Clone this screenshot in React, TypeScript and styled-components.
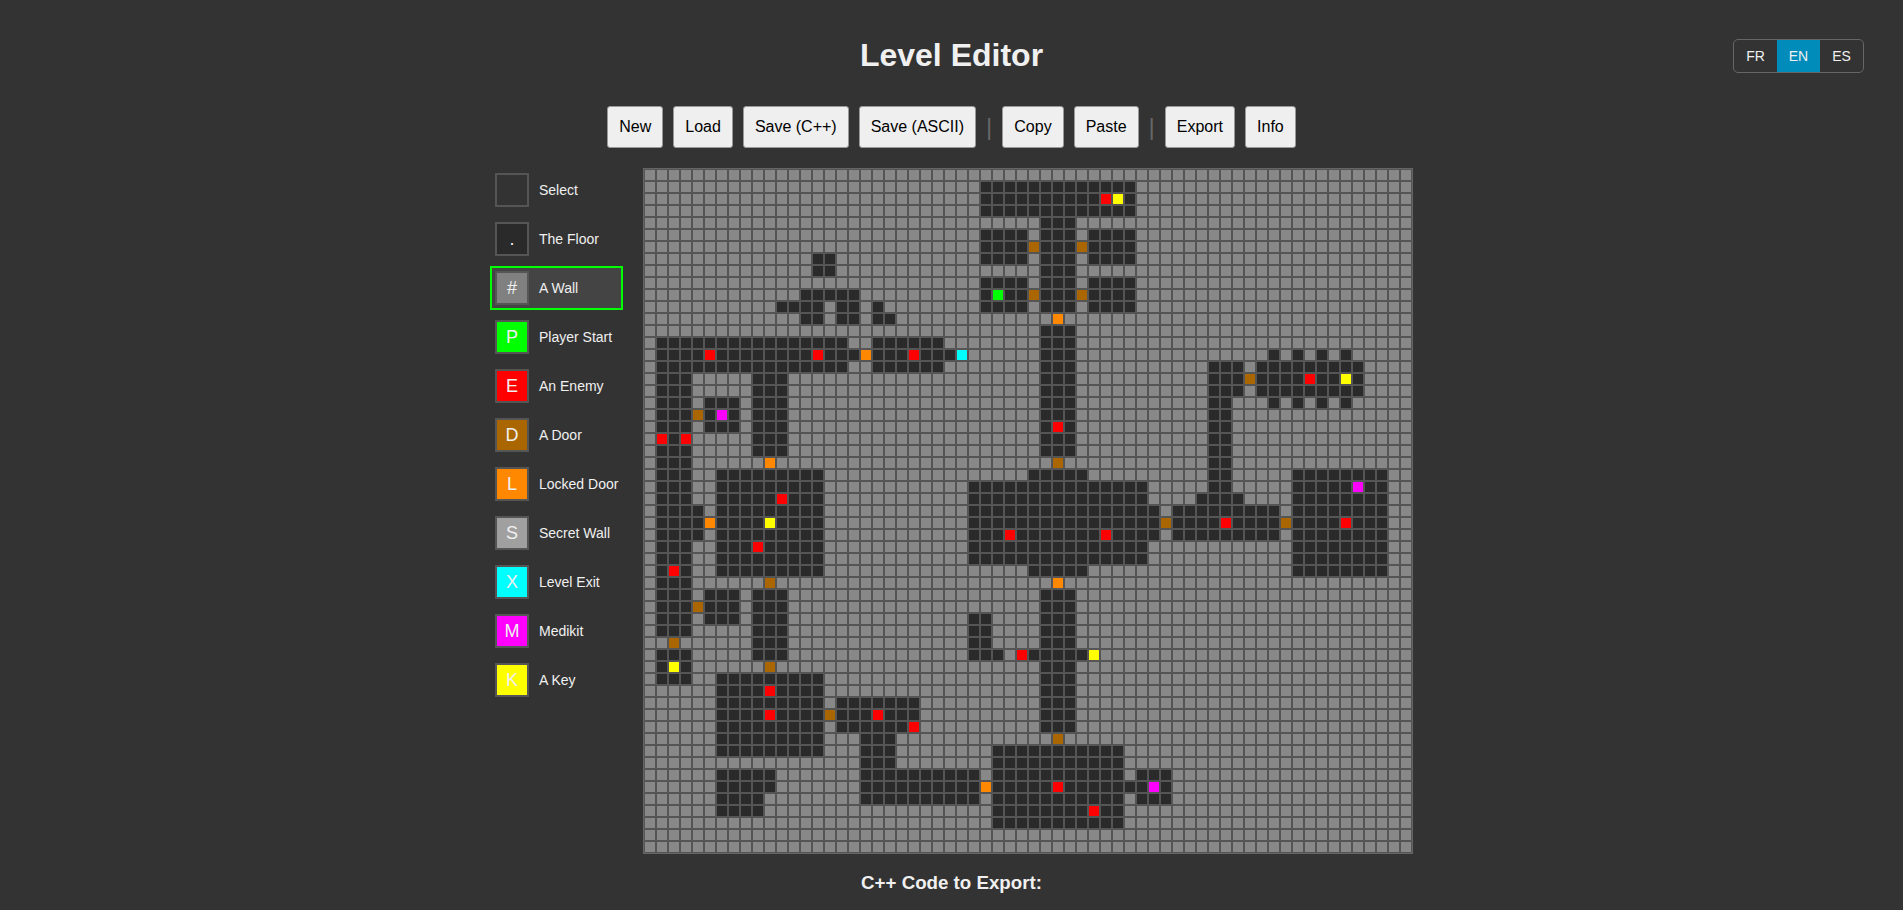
import React from "react";
import styled, { createGlobalStyle } from "styled-components";

type Kind = "." | "#" | "P" | "E" | "D" | "L" | "S" | "X" | "M" | "K" | "";

const COLORS: Record<string, string> = {
  "": "transparent",
  ".": "#2a2a2a",
  "#": "#888888",
  P: "#00ff00",
  E: "#ff0000",
  D: "#aa6600",
  L: "#ff8800",
  S: "#a0a0a0",
  X: "#00ffff",
  M: "#ff00ff",
  K: "#ffff00",
};

const COLS = 64;

const FLOORS: string[] = [
  "",
  "28-40",
  "28-40",
  "28-40",
  "33-35",
  "28-31,33-35,37-40",
  "28-31,33-35,37-40",
  "14-15,28-31,33-35,37-40",
  "14-15,33-35",
  "28-31,33-35,37-40",
  "13-17,28-31,33-35,37-40",
  "11-14,16-17,19,28-31,33-35,37-40",
  "13-14,16-17,19-20",
  "33-35",
  "1-16,19-24,33-35",
  "1-17,19-25,33-35,52,54,56,58",
  "1-16,19-24,33-35,47-49,51-59",
  "1-3,9-11,33-35,47-49,51-59",
  "1-3,9-11,33-35,47-49,51-59",
  "1-3,5-7,9-11,33-35,47-48,52,54,56,58",
  "1-3,5-7,9-11,33-35,47-48",
  "1-3,5-7,9-11,33-35,47-48",
  "1-3,9-11,33-35,47-48",
  "1-3,9-11,33-35,47-48",
  "1-3,47-48",
  "1-3,6-14,32-36,47-48,54-61",
  "1-3,6-14,27-41,47-48,54-61",
  "1-3,6-14,27-41,46-49,54-61",
  "1-4,6-14,27-42,44-52,54-61",
  "1-4,6-14,27-42,44-52,54-61",
  "1-4,6-14,27-42,44-52,54-61",
  "1-3,6-14,27-41,54-61",
  "1-3,6-14,27-41,54-61",
  "1-3,6-14,32-36,54-61",
  "1-3",
  "1-3,5-7,9-11,33-35",
  "1-3,5-7,9-11,33-35",
  "1-3,5-7,9-11,27-28,33-35",
  "1-3,9-11,27-28,33-35",
  "9-11,27-28,33-35",
  "1-3,9-11,27-29,32-36",
  "1-3,33-35",
  "1-3,6-14,33-35",
  "6-14,33-35",
  "6-14,16-22,33-35",
  "6-14,16-22,33-35",
  "6-14,16-21,33-35",
  "6-14,18-20",
  "6-14,18-20,29-39",
  "18-20,29-39",
  "6-10,18-27,29-39,41-43",
  "6-10,18-27,29-41,43",
  "6-9,18-27,29-39,41-43",
  "6-9,29-39",
  "29-39",
  "",
  "",
];

const ENTITIES: [number, number, Kind][] = [
  [2, 38, "E"], [2, 39, "K"],
  [6, 32, "D"], [6, 36, "D"],
  [10, 29, "P"], [10, 32, "D"], [10, 36, "D"],
  [12, 34, "L"],
  [15, 5, "E"], [15, 14, "E"], [15, 18, "L"], [15, 22, "E"], [15, 26, "X"],
  [17, 50, "D"], [17, 55, "E"], [17, 58, "K"],
  [20, 4, "D"], [20, 6, "M"],
  [21, 34, "E"],
  [22, 1, "E"], [22, 3, "E"],
  [24, 10, "L"], [24, 34, "D"],
  [26, 59, "M"],
  [27, 11, "E"],
  [29, 5, "L"], [29, 10, "K"], [29, 43, "D"], [29, 48, "E"], [29, 53, "D"], [29, 58, "E"],
  [30, 30, "E"], [30, 38, "E"],
  [31, 9, "E"],
  [33, 2, "E"],
  [34, 10, "D"], [34, 34, "L"],
  [36, 4, "D"],
  [39, 2, "D"],
  [40, 31, "E"], [40, 37, "K"],
  [41, 2, "K"], [41, 10, "D"],
  [43, 10, "E"],
  [45, 10, "E"], [45, 15, "D"], [45, 19, "E"],
  [46, 22, "E"],
  [47, 34, "D"],
  [51, 28, "L"], [51, 34, "E"], [51, 42, "M"],
  [53, 37, "E"],
];

function buildMap(): Kind[] {
  const rows: Kind[][] = FLOORS.map((spec) => {
    const row: Kind[] = new Array(COLS).fill("#");
    spec.split(",").filter(Boolean).forEach((part) => {
      const [a, b] = part.split("-").map(Number);
      for (let c = a; c <= (b ?? a); c++) row[c] = ".";
    });
    return row;
  });
  ENTITIES.forEach(([r, c, k]) => {
    rows[r][c] = k;
  });
  return rows.flat();
}

const MAP = buildMap();

const TOOLS: { key: Kind; label: string; glyph: string }[] = [
  { key: "", label: "Select", glyph: "" },
  { key: ".", label: "The Floor", glyph: "." },
  { key: "#", label: "A Wall", glyph: "#" },
  { key: "P", label: "Player Start", glyph: "P" },
  { key: "E", label: "An Enemy", glyph: "E" },
  { key: "D", label: "A Door", glyph: "D" },
  { key: "L", label: "Locked Door", glyph: "L" },
  { key: "S", label: "Secret Wall", glyph: "S" },
  { key: "X", label: "Level Exit", glyph: "X" },
  { key: "M", label: "Medikit", glyph: "M" },
  { key: "K", label: "A Key", glyph: "K" },
];

const ACTIONS = [
  ["New", "Load", "Save (C++)", "Save (ASCII)"],
  ["Copy", "Paste"],
  ["Export", "Info"],
];

const Global = createGlobalStyle`
  html, body {
    margin: 0;
    height: 100%;
    overflow: hidden;
    background: #333333;
    color: #f0f0f0;
    font-family: "Liberation Sans", Arial, sans-serif;
  }
`;

const Page = styled.div`
  position: relative;
  padding-top: 37px;
  display: flex;
  flex-direction: column;
  align-items: center;
`;

const Title = styled.h1`
  margin: 0 0 32px;
  font-size: 32px;
  line-height: 37px;
  font-weight: 700;
  color: #f0f0f0;
`;

const LangSwitch = styled.div`
  position: absolute;
  top: 39px;
  right: 39px;
  display: flex;
  height: 34px;
  box-sizing: border-box;
  border: 1px solid #666666;
  border-radius: 5px;
  overflow: hidden;
`;

const LangButton = styled.button<{ $active?: boolean }>`
  width: 43px;
  padding: 0;
  border: 0;
  background: ${(p) => (p.$active ? "#008cba" : "transparent")};
  color: #f0f0f0;
  font-family: inherit;
  font-size: 14px;
`;

const Toolbar = styled.div`
  display: flex;
  align-items: center;
  gap: 10px;
  height: 42px;
  margin-bottom: 20px;
`;

const ActionButton = styled.button`
  height: 42px;
  box-sizing: border-box;
  padding: 0 11px;
  border: 1px solid #999999;
  border-radius: 3px;
  background: #efefef;
  color: #000000;
  font-family: inherit;
  font-size: 16px;
`;

const Separator = styled.span`
  font-size: 24px;
  line-height: 28px;
  color: #666666;
`;

const Workspace = styled.div`
  display: flex;
  align-items: flex-start;
  gap: 20px;
`;

const Palette = styled.div`
  display: flex;
  flex-direction: column;
  gap: 5px;
  width: 133px;
`;

const PaletteItem = styled.div<{ $selected?: boolean }>`
  display: flex;
  align-items: center;
  gap: 10px;
  padding: 3px;
  border: 2px solid ${(p) => (p.$selected ? "#00ff00" : "transparent")};
  background: ${(p) => (p.$selected ? "#444444" : "transparent")};
  font-size: 14px;
  white-space: nowrap;
  color: #f0f0f0;
`;

const Swatch = styled.div<{ $kind: Kind }>`
  flex: none;
  width: 34px;
  height: 34px;
  box-sizing: border-box;
  display: flex;
  align-items: center;
  justify-content: center;
  border: 2px solid #555555;
  background: ${(p) => (p.$kind === "#" ? "#808080" : COLORS[p.$kind])};
  color: #f0f0f0;
  font-size: 18px;
`;

const Board = styled.div`
  display: grid;
  grid-template-columns: repeat(${COLS}, 12px);
  grid-auto-rows: 12px;
  border: 1px solid #666666;
`;

const Cell = styled.div<{ $kind: Kind }>`
  box-sizing: border-box;
  border: 1px solid #555555;
  background: ${(p) => COLORS[p.$kind]};
`;

const CodeHeading = styled.h3`
  margin: 18px 0 0;
  font-size: 18.72px;
  line-height: 22px;
  font-weight: 700;
  color: #f0f0f0;
`;

export default function App() {
  return (
    <Page>
      <Global />
      <Title>Level Editor</Title>
      <LangSwitch>
        <LangButton>FR</LangButton>
        <LangButton $active>EN</LangButton>
        <LangButton>ES</LangButton>
      </LangSwitch>
      <Toolbar>
        {ACTIONS.map((group, i) => (
          <React.Fragment key={i}>
            {i > 0 && <Separator>|</Separator>}
            {group.map((label) => (
              <ActionButton key={label}>{label}</ActionButton>
            ))}
          </React.Fragment>
        ))}
      </Toolbar>
      <Workspace>
        <Palette>
          {TOOLS.map((t) => (
            <PaletteItem key={t.label} $selected={t.key === "#"}>
              <Swatch $kind={t.key}>{t.glyph}</Swatch>
              {t.label}
            </PaletteItem>
          ))}
        </Palette>
        <Board>
          {MAP.map((k, i) => (
            <Cell key={i} $kind={k} />
          ))}
        </Board>
      </Workspace>
      <CodeHeading>C++ Code to Export:</CodeHeading>
    </Page>
  );
}
